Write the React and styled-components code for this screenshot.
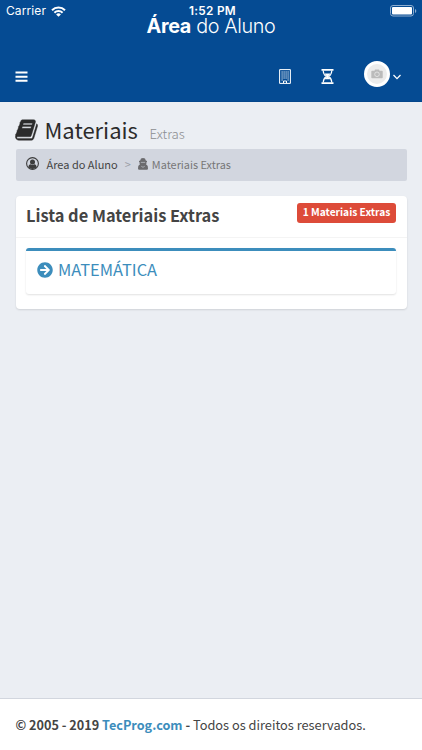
import React from "react";
import styled, { createGlobalStyle } from "styled-components";
import { FaArrowCircleRight } from "react-icons/fa";

const sans = `"Noto Sans CJK SC", "Noto Sans", sans-serif`;

const Global = createGlobalStyle`
  * { box-sizing: border-box; }
  body { margin: 0; background: #ebeef3; font-family: ${sans}; color: #444; }
`;
const Page = styled.div`
  width: 422px; height: 750px; display: flex; flex-direction: column; overflow: hidden;
`;
const Header = styled.header`
  height: 102px; flex: none; background: #054b93; color: #fff; border-bottom: 1px solid #04468b;
  display: flex; flex-direction: column; font-family: Inter, sans-serif;
`;
const StatusBar = styled.div`
  height: 16px; padding: 4px 5px 0 6px; display: grid; grid-template-columns: 1fr auto 1fr;
  align-items: start; line-height: 14px;
`;
const Carrier = styled.div`
  display: flex; align-items: center; gap: 5px; font-size: 12px; letter-spacing: 0.1px;
`;
const Clock = styled.div`font-size: 11.8px; font-weight: 600; letter-spacing: 0.3px; padding-left: 2px;`;
const Battery = styled.svg`justify-self: end; margin-top: 1px;`;
const Logo = styled.div`
  height: 36px; text-align: center; font-size: 19.8px; line-height: 20px; font-weight: 300;
  letter-spacing: -0.36px; white-space: nowrap;
  b { font-weight: 700; }
`;
const NavBar = styled.nav`
  height: 49px; display: flex; align-items: center; padding: 0 21px 0 15px;
`;
const NavIcon = styled.svg`flex: none; margin-left: ${p => p.$gap || 0}px;`;
const Spacer = styled.div`flex: 1;`;
const Avatar = styled.div`
  width: 26px; height: 26px; border-radius: 50%; background: #ececec; border: 3px solid #fff;
  display: flex; align-items: center; justify-content: center; margin: -5px 3px 0 30px;
`;
const Main = styled.main`flex: 1; padding: 13px 15.5px 0;`;
const TitleRow = styled.h1`
  height: 34px; margin: 0; display: flex; align-items: baseline; font-size: 22px; line-height: 28px;
  font-weight: 400; color: #2b2b2b;
  svg { align-self: flex-start; margin: 3px 6.5px 0 -0.5px; }
  small { font-size: 13.3px; font-weight: 300; color: #8b8d91; margin-left: 11.5px; }
`;
const Breadcrumb = styled.div`
  height: 32px; background: #d2d6df; border-radius: 2px; display: flex; align-items: center;
  padding: 0 10px 3px; font-size: 11px; line-height: 28px; color: #444;
`;
const Crumb = styled.span`
  display: flex; align-items: center; font-size: ${p => (p.$muted ? 10.9 : 11)}px;
  color: ${p => (p.$muted ? "#777" : "#444")};
  svg { margin-right: ${p => (p.$muted ? 4 : 8)}px; }
`;
const Separator = styled.span`color: #9b9ea6; margin: 0 7px;`;
const Card = styled.section`
  margin-top: 15px; height: 113px; background: #fff; border-radius: 4px;
  box-shadow: 0 1px 2px rgba(0, 0, 0, 0.12);
`;
const CardHeader = styled.div`
  height: 42px; padding: 7px 10.5px 0; border-bottom: 1px solid #f4f4f4;
  display: flex; justify-content: space-between; align-items: flex-start;
`;
const CardTitle = styled.h2`margin: 0; font-size: 16.4px; line-height: 24px; font-weight: 700; color: #444;`;
const Badge = styled.span`
  width: 99px; height: 20px; border-radius: 3px; background: #dd4b39; color: #fff;
  font-size: 10.2px; line-height: 18px; font-weight: 700; text-align: center; white-space: nowrap;
`;
const Subject = styled.a`
  margin: 10px 10.5px 0; height: 45.5px; border-top: 3px solid #3c8dbc; border-radius: 3px;
  box-shadow: 0 1px 2px rgba(0, 0, 0, 0.12); display: flex; align-items: center; gap: 5px;
  padding: 0 11px 6px; color: #3c8dbc; font-size: 16.4px; line-height: 24px;
  svg { margin-top: 1px; }
`;
const Footer = styled.footer`
  height: 52px; flex: none; background: #fff; border-top: 1px solid #d2d6de; padding: 1px 15.5px 0;
  font-size: 12.8px; line-height: 50px; white-space: nowrap;
  b { font-size: 12.65px; }
  a { color: #3c8dbc; }
`;

const Wifi = () => (
  <svg width="15" height="11" viewBox="0 0 15 11" fill="none" stroke="#fff" strokeWidth="2">
    <path d="M1 4.2a9.2 9.2 0 0 1 13 0M3.4 6.7a5.8 5.8 0 0 1 8.2 0" />
    <path d="M7.5 10.8 5.1 8.4a3.4 3.4 0 0 1 4.8 0z" fill="#fff" stroke="none" />
  </svg>
);
const Book = () => (
  <svg width="23" height="24" viewBox="0 0 1664 1792" fill="currentColor" stroke="currentColor" strokeWidth="30">
    <path d="M1639 478q40 57 18 129l-275 906q-19 64-76.5 107.5t-122.5 43.5h-923q-77 0-148.5-53.5t-99.5-131.5q-24-67-2-127 0-4 3-27t4-37q1-8-3-21.5t-3-19.5q2-11 8-21t16.5-23.5 16.5-23.5q23-38 45-91.5t30-91.5q3-10 .5-30t-.5-28q3-11 17-28t17-23q21-36 42-92t25-90q1-9-2.5-32t.5-28q4-13 22-30.5t22-22.5q19-26 42.5-84.5t27.5-96.5q1-8-3-25.5t-2-26.5q2-8 9-18t18-23 17-21q8-12 16.5-30.5t15-35 16-36 19.5-32 26.5-23.5 36-11.5 47.5 5.5l-1 3q38-9 51-9h761q74 0 114 56t18 130l-274 906q-36 119-71.5 153.5t-128.5 34.5h-869q-27 0-38 15-11 16-1 43 24 70 144 70h923q29 0 56-15.5t35-41.5l300-987q7-22 5-57 38 15 59 43zm-1064 2q-4 13 2 22.5t20 9.5h608q13 0 25.5-9.5t16.5-22.5l21-64q4-13-2-22.5t-20-9.5h-608q-13 0-25.5 9.5t-16.5 22.5zm-83 256q-4 13 2 22.5t20 9.5h608q13 0 25.5-9.5t16.5-22.5l21-64q4-13-2-22.5t-20-9.5h-608q-13 0-25.5 9.5t-16.5 22.5z" />
  </svg>
);
const UserCircle = () => (
  <svg width="13" height="13" viewBox="0 0 13 13">
    <circle cx="6.5" cy="6.5" r="5.9" fill="none" stroke="#3c3c3c" strokeWidth="1.1" />
    <circle cx="6.5" cy="5" r="2.5" fill="#3c3c3c" />
    <path d="M2.3 10.3C2.5 8.2 3.4 7.4 4.7 7.2q1.8 1.2 3.6 0c1.3.2 2.2 1 2.4 3.1A5.8 5.8 0 0 1 6.5 12a5.8 5.8 0 0 1-4.2-1.7z" fill="#3c3c3c" />
  </svg>
);
const Secret = () => (
  <svg width="10" height="12" viewBox="0 0 10 12" fill="#6b6b6e">
    <path d="M2.2 2.6 3 .6q2-1 4 0l.8 2 1.2.5v.8L8.4 4.2v1.5L8 6.5l1 .6q1 .8 1 3.4 0 1.3-1.2 1.3H1.2Q0 11.8 0 10.5q0-2.6 1-3.4l1-.6-.4-.8V4.2L1 3.9v-.8z" />
    <path d="M2.8 4.4h4.4M3.3 8.3 5 9.3l1.7-1" stroke="#d2d6df" strokeWidth=".6" fill="none" />
  </svg>
);

export default function App() {
  return (
    <Page>
      <Global />
      <Header>
        <StatusBar>
          <Carrier>Carrier <Wifi /></Carrier>
          <Clock>1:52 PM</Clock>
          <Battery width="27" height="12" viewBox="0 0 27 12">
            <rect x=".5" y=".5" width="23" height="10.5" rx="2.5" fill="none" stroke="#8dadd0" />
            <rect x="2" y="2" width="20" height="7.5" rx="1" fill="#fff" />
            <path d="M25 4v4q1.3-.5 1.3-2T25 4z" fill="#8dadd0" />
          </Battery>
        </StatusBar>
        <Logo><b>Área</b> do Aluno</Logo>
        <NavBar>
          <NavIcon width="13" height="12" viewBox="0 0 13 12">
            <path d="M.5 1.6h12M.5 5.7h12M.5 9.8h12" stroke="#fff" strokeWidth="2" />
          </NavIcon>
          <Spacer />
          <NavIcon width="12" height="15" viewBox="0 0 12 15" fill="none" stroke="#fff">
            <path d="M.6.6h10.8v13.8H.6z" />
            <path d="M2.5 3h7.5M2.5 5h7.5M2.5 7h7.5M2.5 9h7.5M2.5 11h1.2M8.5 11h1.2" strokeDasharray="1.2 .8" />
            <path d="M4.5 14v-2h3V14" />
          </NavIcon>
          <NavIcon $gap={30} width="13" height="15" viewBox="0 0 13 15" fill="#fff">
            <path d="M.5 0h12v1.7h-12zM.5 13.3h12V15h-12z" />
            <path d="M2.2 1.5c0 3 1.4 4.8 3 6-1.6 1.2-3 3-3 6M10.8 1.5c0 3-1.4 4.8-3 6 1.6 1.2 3 3 3 6" fill="none" stroke="#fff" strokeWidth="1.1" />
            <path d="M3.3 4.6h6.4L7.5 7v1l2.4 2.3H3.1L5.5 8V7z" />
          </NavIcon>
          <Avatar>
            <svg width="12" height="10" viewBox="0 0 12 10">
              <path d="M1 1.8h2.5L4 .5h4l.5 1.3H11q.7 0 .7.7v6q0 .8-.7.8H1q-.7 0-.7-.8v-6q0-.7.7-.7z" fill="#bbb" />
              <circle cx="6" cy="5.3" r="2.3" fill="none" stroke="#e8e8e8" strokeWidth=".8" />
            </svg>
          </Avatar>
          <NavIcon width="8" height="6" viewBox="0 0 8 6" fill="none" stroke="#fff" strokeWidth="1.3">
            <path d="m.5 1 3.5 3.6L7.5 1" />
          </NavIcon>
        </NavBar>
      </Header>
      <Main>
        <TitleRow><Book />Materiais<small>Extras</small></TitleRow>
        <Breadcrumb>
          <Crumb><UserCircle />Área do Aluno</Crumb>
          <Separator>&gt;</Separator>
          <Crumb $muted><Secret />Materiais Extras</Crumb>
        </Breadcrumb>
        <Card>
          <CardHeader>
            <CardTitle>Lista de Materiais Extras</CardTitle>
            <Badge>1 Materiais Extras</Badge>
          </CardHeader>
          <Subject><FaArrowCircleRight size={16} />MATEMÁTICA</Subject>
        </Card>
      </Main>
      <Footer><b>© 2005 - 2019 <a>TecProg.com</a> -</b> Todos os direitos reservados.</Footer>
    </Page>
  );
}
